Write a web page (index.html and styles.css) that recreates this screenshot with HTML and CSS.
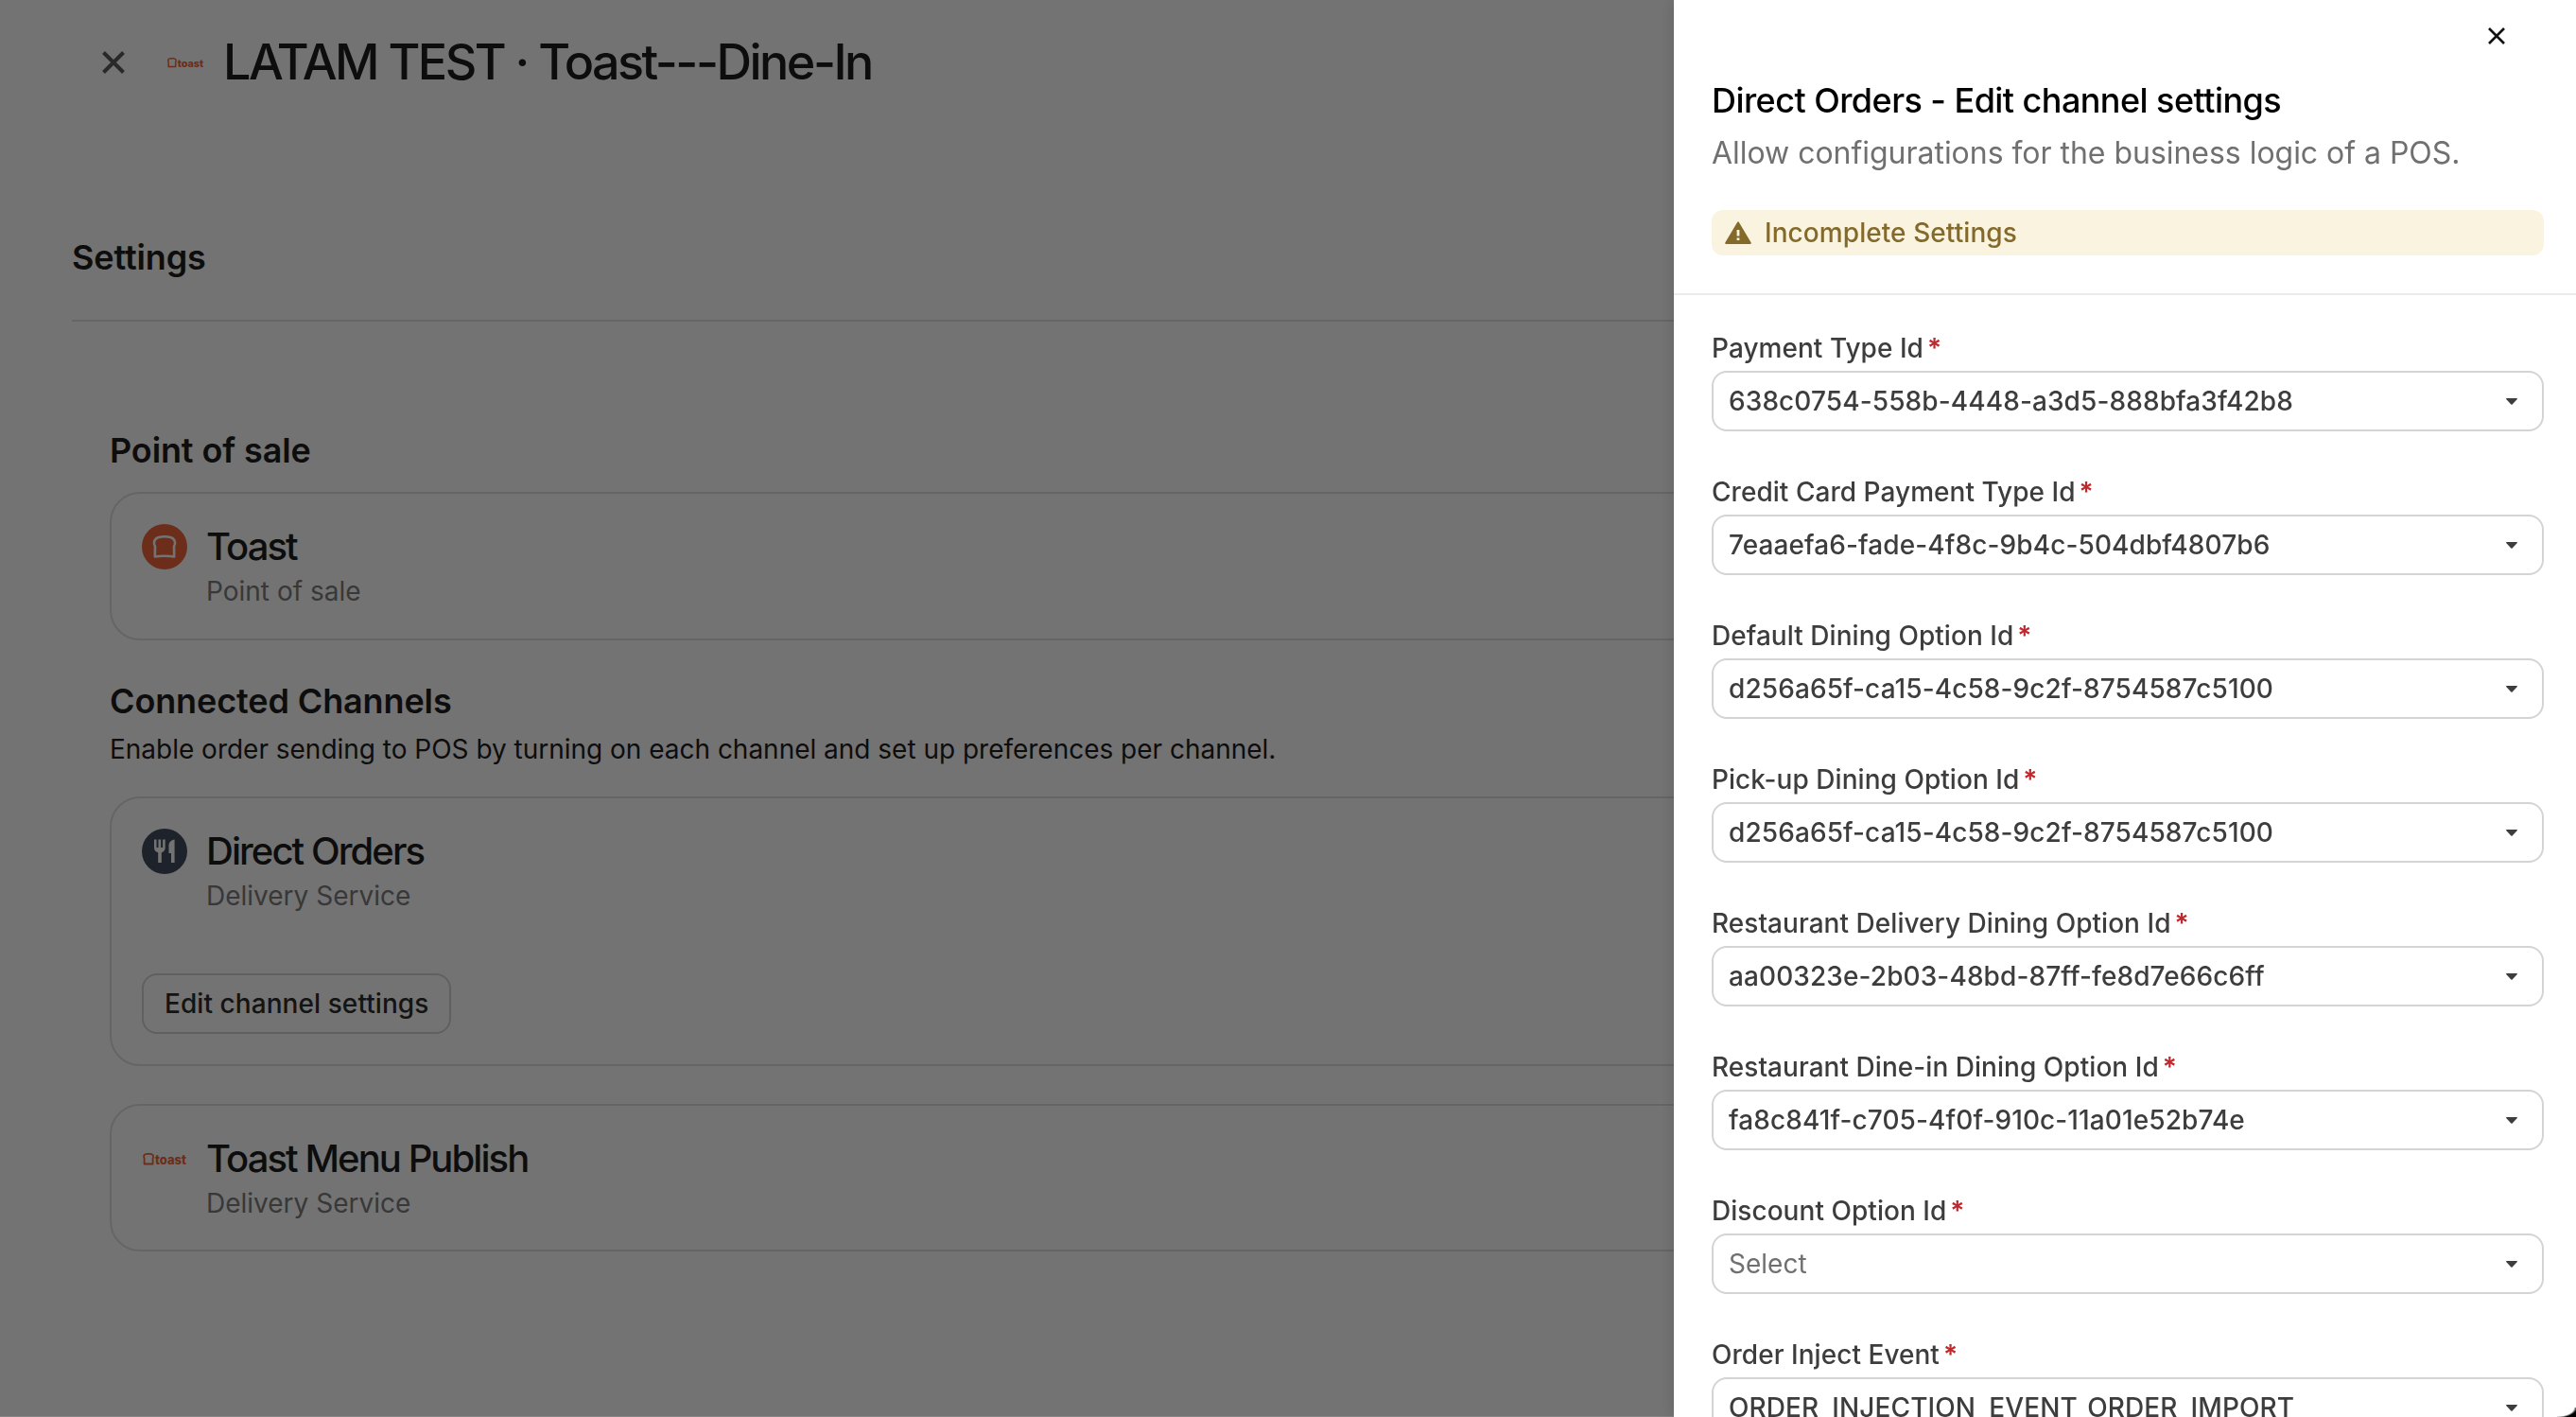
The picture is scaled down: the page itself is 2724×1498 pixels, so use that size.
FILE: index.html
```html
<!DOCTYPE html>
<html lang="en">
<head>
  <meta charset="UTF-8" />
  <meta name="viewport" content="width=device-width, initial-scale=1.0" />
  <title>Channel settings</title>
  <link rel="stylesheet" href="styles.css">
</head>
<body>
  <svg class="sprite" width="0" height="0">
    <symbol id="caret" viewBox="0 0 12 7">
      <path d="M0.6 0h10.8c.5 0 .7.6.4 1L6.7 6.4a1 1 0 0 1-1.4 0L.2 1C-.1.600.1 0 .6 0z" fill="#3d3d3d" />
    </symbol>
  </svg>

  <main class="page">
    <header class="topbar">
      <svg class="close-page" viewBox="0 0 24 24"><path d="M1.500 1.500l21 21M22.500 1.500l-21 21" /></svg>
      <svg class="logo logo-small" viewBox="0 0 48 20">
        <path class="logo-bread" d="M2.600 15.500V9.500C1.200 7.200 2.500 4.800 5.500 4.800h3.200c3 0 4.300 2.400 2.900 4.700v6z" />
        <text x="14" y="15.500" class="logo-text" textLength="33" lengthAdjust="spacingAndGlyphs">toast</text>
      </svg>
      <h1>LATAM TEST · Toast---Dine-In</h1>
    </header>

    <h2 class="settings-title">Settings</h2>

    <section class="settings">
      <h2>Point of sale</h2>
      <div class="card">
        <div class="card-head">
          <svg class="logo" viewBox="0 0 48 48">
            <circle cx="24" cy="24" r="24" fill="#f0663c" />
            <path d="M13.800 34.400L14 23.600C11.800 20.800 13 15.600 17 14.200Q24 12.400 31 14.200C35 15.600 36.200 20.800 34 23.600L34.200 34.400Q24 33.200 13.800 34.400z" fill="none" stroke="#fff" stroke-width="2.600" stroke-linejoin="round" />
          </svg>
          <div>
            <h3>Toast</h3>
            <p>Point of sale</p>
          </div>
        </div>
      </div>

      <h2 class="channels-title">Connected Channels</h2>
      <p class="hint">Enable order sending to POS by turning on each channel and set up preferences per channel.</p>

      <div class="card card-channel">
        <div class="card-head">
          <svg class="logo" viewBox="0 0 48 48">
            <circle cx="24" cy="24" r="24" fill="#434c5e" />
            <path d="M13 11.500h2.500v8.500h2v-8.500h2.600v8.500h2v-8.500h2.600v8.500a5.500 5.500 0 0 1-3.900 5.200V36h-3.600V25.200A5.500 5.500 0 0 1 13 20z" fill="#fff" />
            <path d="M34.600 11.500V36H31V26h-2.500V18c0-3.500 2.600-6.200 6.100-6.500z" fill="#fff" />
          </svg>
          <div>
            <h3>Direct Orders</h3>
            <p>Delivery Service</p>
          </div>
        </div>
        <button class="edit-btn">Edit channel settings</button>
      </div>

      <div class="card card-last">
        <div class="card-head">
          <svg class="logo" viewBox="0 0 48 20">
            <path class="logo-bread" d="M2.600 15.500V9.500C1.200 7.200 2.500 4.800 5.500 4.800h3.200c3 0 4.300 2.400 2.900 4.700v6z" />
            <text x="14" y="15.500" class="logo-text" textLength="33" lengthAdjust="spacingAndGlyphs">toast</text>
          </svg>
          <div>
            <h3>Toast Menu Publish</h3>
            <p>Delivery Service</p>
          </div>
        </div>
      </div>
    </section>
  </main>

  <div class="overlay"></div>

  <aside class="drawer">
    <header class="drawer-head">
      <svg class="close-drawer" viewBox="0 0 18 18"><path d="M1 1l16 16M17 1L1 17" /></svg>
      <h2>Direct Orders - Edit channel settings</h2>
      <p>Allow configurations for the business logic of a POS.</p>
      <div class="badge">
        <svg viewBox="0 0 28 24">
          <path d="M13.100.900a1.100 1.100 0 0 1 1.800 0L27.700 22.500a1 1 0 0 1-.9 1.500H1.200a1 1 0 0 1-.9-1.500z" fill="#846a2a" />
          <path d="M14 9v6.500M14 17.500v2.500" stroke="#f9f3e0" stroke-width="2.800" />
        </svg>
        Incomplete Settings
      </div>
    </header>

    <div class="fields">
      <div class="field">
        <label>Payment Type Id<span>*</span></label>
        <div class="select">638c0754-558b-4448-a3d5-888bfa3f42b8<svg><use href="#caret" /></svg></div>
      </div>
      <div class="field">
        <label>Credit Card Payment Type Id<span>*</span></label>
        <div class="select">7eaaefa6-fade-4f8c-9b4c-504dbf4807b6<svg><use href="#caret" /></svg></div>
      </div>
      <div class="field">
        <label>Default Dining Option Id<span>*</span></label>
        <div class="select">d256a65f-ca15-4c58-9c2f-8754587c5100<svg><use href="#caret" /></svg></div>
      </div>
      <div class="field">
        <label>Pick-up Dining Option Id<span>*</span></label>
        <div class="select">d256a65f-ca15-4c58-9c2f-8754587c5100<svg><use href="#caret" /></svg></div>
      </div>
      <div class="field">
        <label>Restaurant Delivery Dining Option Id<span>*</span></label>
        <div class="select">aa00323e-2b03-48bd-87ff-fe8d7e66c6ff<svg><use href="#caret" /></svg></div>
      </div>
      <div class="field">
        <label>Restaurant Dine-in Dining Option Id<span>*</span></label>
        <div class="select">fa8c841f-c705-4f0f-910c-11a01e52b74e<svg><use href="#caret" /></svg></div>
      </div>
      <div class="field">
        <label>Discount Option Id<span>*</span></label>
        <div class="select placeholder">Select<svg><use href="#caret" /></svg></div>
      </div>
      <div class="field">
        <label>Order Inject Event<span>*</span></label>
        <div class="select">ORDER_INJECTION_EVENT_ORDER_IMPORT<svg><use href="#caret" /></svg></div>
      </div>
    </div>
  </aside>

  <div class="window-corner"></div>
</body>
</html>
```
FILE: styles.css
```css
* {
  box-sizing: border-box;
}
body {
  margin: 0;
  height: 1498px;
  overflow: hidden;
  background: #fff;
  color: #1d1d1d;
  font-family: Inter, "Liberation Sans", sans-serif;
  font-size: 28px;
}
h1, h2, h3, p {
  margin: 0;
}
.sprite {
  position: absolute;
}
.page {
  padding-left: 76px;
}
.topbar {
  display: flex;
  align-items: center;
  height: 132px;
  padding-left: 32px;
}
.close-page {
  width: 24px;
  height: 24px;
  stroke: #5c5c5c;
  stroke-width: 4;
}
h1 {
  margin-left: 20px;
  padding-bottom: 2px;
  font-size: 52px;
  font-weight: 500;
  letter-spacing: -2.5px;
}
.logo {
  width: 48px;
  height: 48px;
  flex: none;
}
.logo-small {
  width: 40px;
  margin-left: 44px;
}
.logo-bread {
  fill: none;
  stroke: #f0663c;
  stroke-width: 1.8;
  stroke-linejoin: round;
}
.logo-text {
  font-family: Inter, sans-serif;
  font-size: 13px;
  font-weight: 800;
  fill: #f0663c;
}
h2 {
  font-size: 36px;
  line-height: 48px;
  font-weight: 600;
  letter-spacing: -0.12px;
}
.settings-title {
  margin-top: 116px;
  height: 92px;
  border-bottom: 2px solid #e2e2e2;
}
.settings {
  padding: 112px 40px 0;
}
.card {
  height: 157px;
  margin-top: 20px;
  padding: 24px 32px;
  border: 2px solid #e0e0e0;
  border-radius: 32px;
}
.card-head {
  display: flex;
  gap: 20px;
}
.card-head .logo {
  margin-top: 8px;
}
h3 {
  font-size: 40px;
  line-height: 63px;
  font-weight: 500;
  letter-spacing: -1.93px;
}
.card-head p {
  line-height: 32px;
  color: #7d7d7d;
}
.channels-title {
  margin-top: 40px;
}
.hint {
  margin-top: 7px;
  line-height: 40px;
  letter-spacing: -0.015px;
}
.hint + .card {
  margin-top: 30px;
}
.card-channel {
  height: 285px;
  margin-bottom: 40px;
}
.card-last {
  height: 156px;
}
.edit-btn {
  height: 64px;
  margin-top: 66px;
  padding: 0 22px;
  border: 2px solid #d4d4d4;
  border-radius: 16px;
  background: none;
  font: 500 28px Inter, sans-serif;
  letter-spacing: 0.07px;
  color: #2d2d2d;
}
.overlay {
  position: fixed;
  inset: 0;
  background: rgba(0, 0, 0, 0.55);
  border-bottom: 1px solid #858585;
}
.drawer {
  position: fixed;
  top: 0;
  right: 0;
  bottom: 0;
  width: 954px;
  overflow: hidden;
  background: #fff;
  box-shadow: 0 0 16px rgba(0, 0, 0, 0.16);
}
.drawer-head {
  display: flex;
  flex-direction: column;
  height: 312px;
  padding: 29px 34px 0 40px;
  border-bottom: 2px solid #ebebeb;
}
.close-drawer {
  align-self: flex-end;
  width: 18px;
  height: 18px;
  margin-right: 41px;
  stroke: #111;
  stroke-width: 2.6;
}
.drawer-head h2 {
  margin-top: 35px;
  font-weight: 550;
  letter-spacing: -0.56px;
  color: #000;
}
.drawer-head p {
  margin-top: 8px;
  font-size: 32px;
  line-height: 48px;
  letter-spacing: -0.03px;
  color: #707070;
}
.badge {
  display: flex;
  align-items: center;
  gap: 14px;
  height: 48px;
  margin-top: 36px;
  padding-left: 14px;
  border-radius: 12px;
  background: #f9f3e0;
  color: #846a2a;
  font-weight: 500;
  letter-spacing: 0.07px;
}
.badge svg {
  width: 28px;
  height: 24px;
}
.fields {
  display: flex;
  flex-direction: column;
  gap: 44px;
  padding: 36px 34px 0 40px;
  font-weight: 500;
  color: #3d3d3d;
}
.field label {
  display: block;
  height: 44px;
  line-height: 40px;
  letter-spacing: 0.04px;
}
.field label span {
  margin-left: 4px;
  font-weight: 600;
  color: #c0282d;
}
.select {
  display: flex;
  align-items: center;
  justify-content: space-between;
  height: 64px;
  padding: 0 26px 0 16px;
  border: 2px solid #d4d4d4;
  border-radius: 16px;
  letter-spacing: 0.1px;
}
.select svg {
  width: 12px;
  height: 7px;
}
.placeholder {
  font-weight: 400;
  letter-spacing: 0;
  color: #707070;
}
/* rounded edge of the window */
.window-corner {
  position: fixed;
  right: 0;
  bottom: 0;
  width: 20px;
  height: 10px;
  background: radial-gradient(ellipse 21px 11px at 0 0, transparent 84%, #000 100%);
}
```
